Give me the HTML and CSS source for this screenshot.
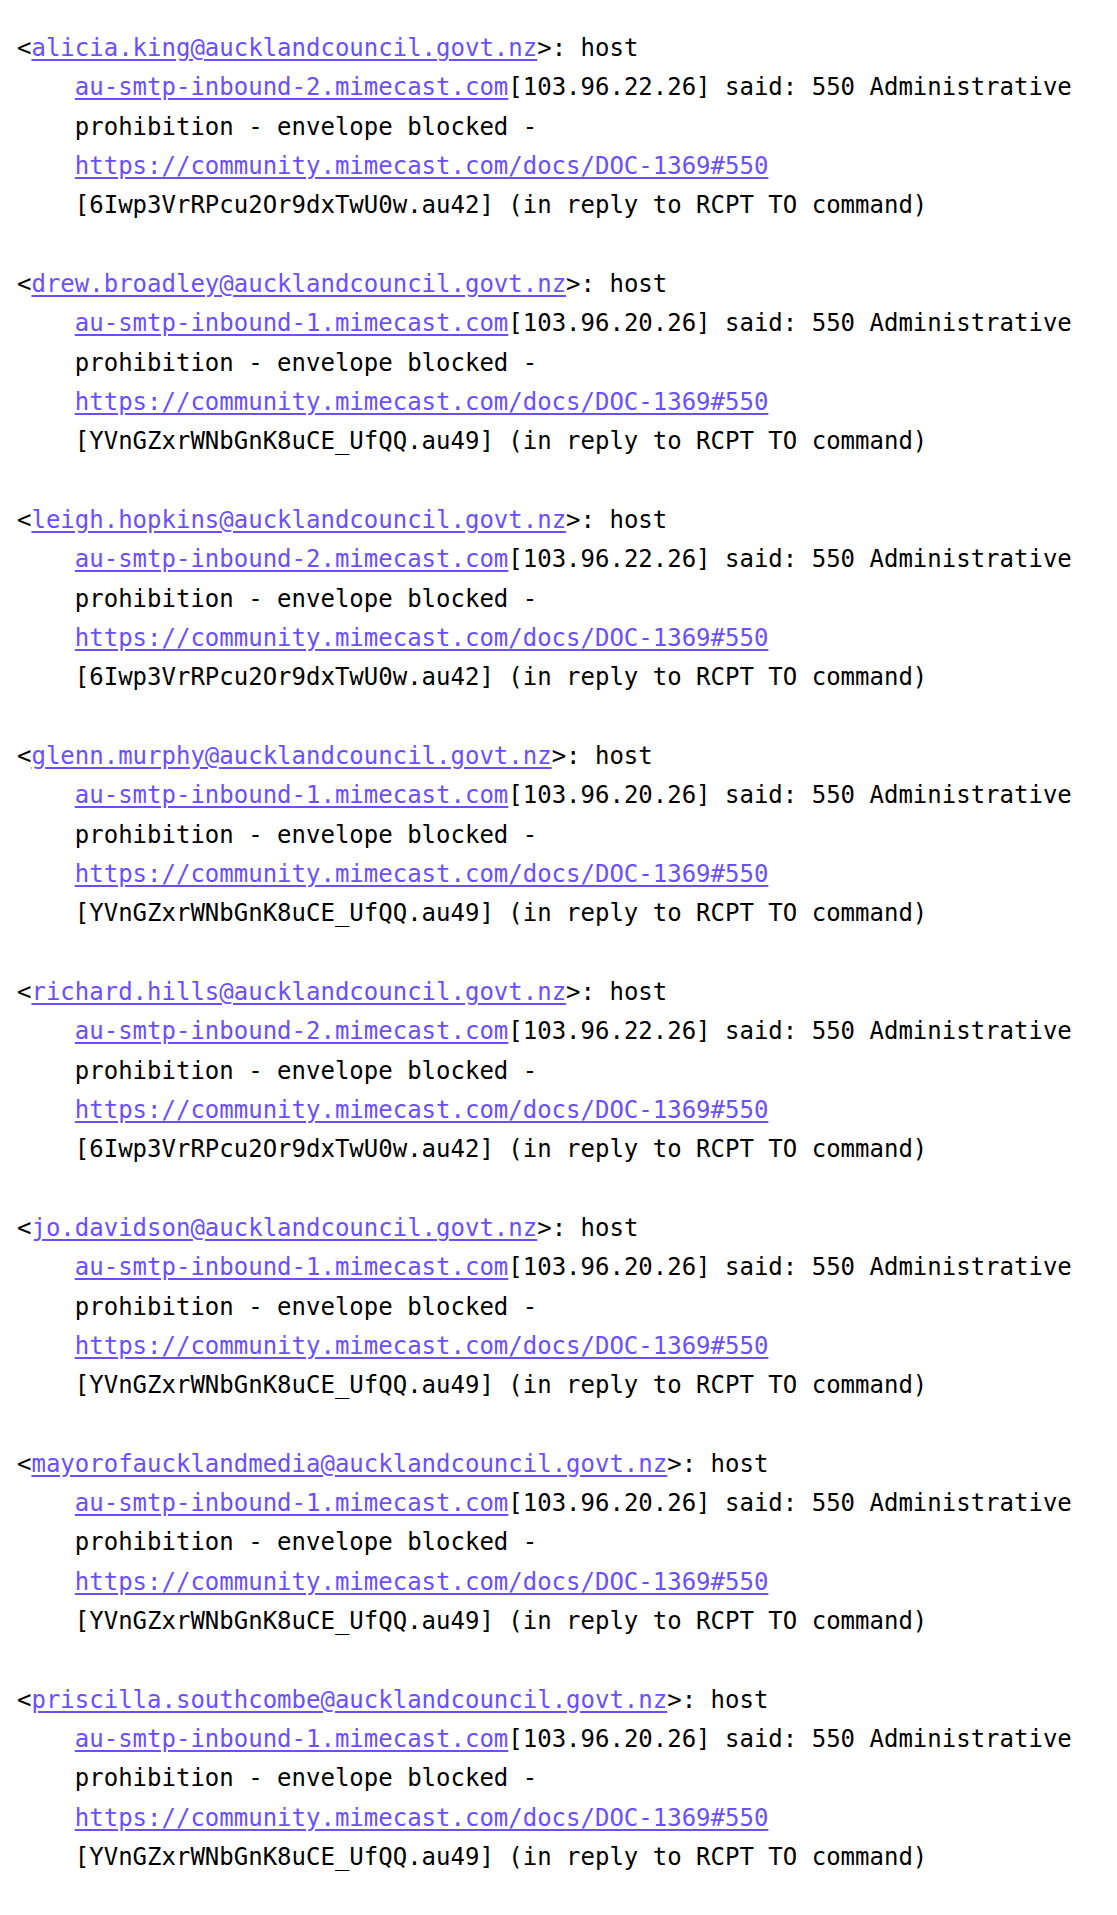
FILE: index.html
```html
<!DOCTYPE html>
<html lang="en">
<head>
  <meta charset="UTF-8">
  <title>Delivery report</title>
  <link rel="stylesheet" href="styles.css">
</head>
<body>
<div class="report">
  <div class="entry">
    <div class="line">&lt;<a href="#">alicia.king@aucklandcouncil.govt.nz</a><span>&gt;: host</span></div>
    <div class="line cont"><a href="#">au-smtp-inbound-2.mimecast.com</a><span>[103.96.22.26] said: 550 Administrative</span></div>
    <div class="line cont">prohibition - envelope blocked -</div>
    <div class="line cont"><a href="#">https://community.mimecast.com/docs/DOC-1369#550</a></div>
    <div class="line cont">[6Iwp3VrRPcu2Or9dxTwU0w.au42] (in reply to RCPT TO command)</div>
  </div>
  <div class="entry">
    <div class="line">&lt;<a href="#">drew.broadley@aucklandcouncil.govt.nz</a><span>&gt;: host</span></div>
    <div class="line cont"><a href="#">au-smtp-inbound-1.mimecast.com</a><span>[103.96.20.26] said: 550 Administrative</span></div>
    <div class="line cont">prohibition - envelope blocked -</div>
    <div class="line cont"><a href="#">https://community.mimecast.com/docs/DOC-1369#550</a></div>
    <div class="line cont">[YVnGZxrWNbGnK8uCE_UfQQ.au49] (in reply to RCPT TO command)</div>
  </div>
  <div class="entry">
    <div class="line">&lt;<a href="#">leigh.hopkins@aucklandcouncil.govt.nz</a><span>&gt;: host</span></div>
    <div class="line cont"><a href="#">au-smtp-inbound-2.mimecast.com</a><span>[103.96.22.26] said: 550 Administrative</span></div>
    <div class="line cont">prohibition - envelope blocked -</div>
    <div class="line cont"><a href="#">https://community.mimecast.com/docs/DOC-1369#550</a></div>
    <div class="line cont">[6Iwp3VrRPcu2Or9dxTwU0w.au42] (in reply to RCPT TO command)</div>
  </div>
  <div class="entry">
    <div class="line">&lt;<a href="#">glenn.murphy@aucklandcouncil.govt.nz</a><span>&gt;: host</span></div>
    <div class="line cont"><a href="#">au-smtp-inbound-1.mimecast.com</a><span>[103.96.20.26] said: 550 Administrative</span></div>
    <div class="line cont">prohibition - envelope blocked -</div>
    <div class="line cont"><a href="#">https://community.mimecast.com/docs/DOC-1369#550</a></div>
    <div class="line cont">[YVnGZxrWNbGnK8uCE_UfQQ.au49] (in reply to RCPT TO command)</div>
  </div>
  <div class="entry">
    <div class="line">&lt;<a href="#">richard.hills@aucklandcouncil.govt.nz</a><span>&gt;: host</span></div>
    <div class="line cont"><a href="#">au-smtp-inbound-2.mimecast.com</a><span>[103.96.22.26] said: 550 Administrative</span></div>
    <div class="line cont">prohibition - envelope blocked -</div>
    <div class="line cont"><a href="#">https://community.mimecast.com/docs/DOC-1369#550</a></div>
    <div class="line cont">[6Iwp3VrRPcu2Or9dxTwU0w.au42] (in reply to RCPT TO command)</div>
  </div>
  <div class="entry">
    <div class="line">&lt;<a href="#">jo.davidson@aucklandcouncil.govt.nz</a><span>&gt;: host</span></div>
    <div class="line cont"><a href="#">au-smtp-inbound-1.mimecast.com</a><span>[103.96.20.26] said: 550 Administrative</span></div>
    <div class="line cont">prohibition - envelope blocked -</div>
    <div class="line cont"><a href="#">https://community.mimecast.com/docs/DOC-1369#550</a></div>
    <div class="line cont">[YVnGZxrWNbGnK8uCE_UfQQ.au49] (in reply to RCPT TO command)</div>
  </div>
  <div class="entry">
    <div class="line">&lt;<a href="#">mayorofaucklandmedia@aucklandcouncil.govt.nz</a><span>&gt;: host</span></div>
    <div class="line cont"><a href="#">au-smtp-inbound-1.mimecast.com</a><span>[103.96.20.26] said: 550 Administrative</span></div>
    <div class="line cont">prohibition - envelope blocked -</div>
    <div class="line cont"><a href="#">https://community.mimecast.com/docs/DOC-1369#550</a></div>
    <div class="line cont">[YVnGZxrWNbGnK8uCE_UfQQ.au49] (in reply to RCPT TO command)</div>
  </div>
  <div class="entry">
    <div class="line">&lt;<a href="#">priscilla.southcombe@aucklandcouncil.govt.nz</a><span>&gt;: host</span></div>
    <div class="line cont"><a href="#">au-smtp-inbound-1.mimecast.com</a><span>[103.96.20.26] said: 550 Administrative</span></div>
    <div class="line cont">prohibition - envelope blocked -</div>
    <div class="line cont"><a href="#">https://community.mimecast.com/docs/DOC-1369#550</a></div>
    <div class="line cont">[YVnGZxrWNbGnK8uCE_UfQQ.au49] (in reply to RCPT TO command)</div>
  </div>
</div>
</body>
</html>
```

FILE: styles.css
```css
body {
  margin: 0;
  background: #fff;
}
.report {
  display: flex;
  flex-direction: column;
  gap: 39.33px;
  padding: 29px 0 0 17px;
  font-family: "DejaVu Sans Mono", "Liberation Mono", monospace;
  font-size: 24px;
  line-height: 39.33px;
  color: #000;
}
.line {
  white-space: pre;
}
.cont {
  padding-left: 4ch;
}
.report a {
  color: #6a4fff;
  text-decoration: underline;
  text-underline-offset: 3px;
}
```
